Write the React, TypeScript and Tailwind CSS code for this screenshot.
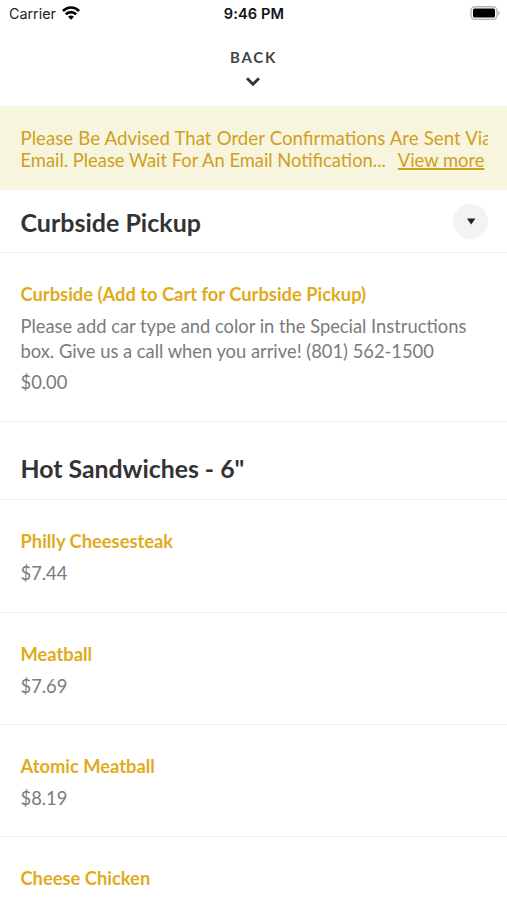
const items = [
  { name: 'Philly Cheesesteak', price: '$7.44', box: 'h-[113px] border-b' },
  { name: 'Meatball', price: '$7.69', box: 'h-[112px] border-b' },
  { name: 'Atomic Meatball', price: '$8.19', box: 'h-[112px] border-b' },
  { name: 'Cheese Chicken', price: null, box: 'h-[63px]' },
];

function StatusBar() {
  return (
    <div className="grid h-7 grid-cols-3 items-center pl-[9px] pr-[7px] font-['Inter',sans-serif] text-[14.3px] text-[#222]">
      <div className="flex items-center gap-[6px]">
        <span>Carrier</span>
        <svg className="-mt-[2px]" width="18" height="14" viewBox="0 0 18 14" fill="none" stroke="#000" strokeWidth="2.6">
          <path d="M.9 5C5.4.4 12.6.4 17.1 5M3.8 8.3c3-2.9 7.4-2.9 10.4 0" />
          <path d="M9 13.8 6 10.7c1.7-1.6 4.3-1.6 6 0Z" fill="#000" stroke="none" />
        </svg>
      </div>
      <span className="-ml-px whitespace-nowrap pt-px text-center text-[14.6px] font-semibold leading-[21px] tracking-[0.1px] text-[#111]">9:46 PM</span>
      <svg className="-mt-[2px] justify-self-end" width="30" height="14" viewBox="0 0 30 14">
        <rect x="1" y=".7" width="26" height="12.8" rx="4" fill="#fff" stroke="#b5b5b5" strokeWidth="1.4" />
        <rect x="3" y="2.6" width="22" height="9" rx="1.5" fill="#000" />
        <path d="M28.3 4.8c1.8.7 1.8 3.9 0 4.6Z" fill="#b0b0b0" />
      </svg>
    </div>
  );
}

export default function App() {
  return (
    <main className="h-[900px] w-[507px] overflow-hidden bg-white font-['Lato',sans-serif] text-[#7b7b7b]">
      <StatusBar />
      <header className="flex h-[78px] flex-col items-center pt-[19px]">
        <span className="text-[15px] font-bold leading-[20px] tracking-[1.8px] text-[#444]">BACK</span>
        <svg className="mr-px mt-[10px]" width="14" height="10" viewBox="0 0 14 10" fill="none" stroke="#333" strokeWidth="2.8">
          <path d="m1 1.2 6 6 6-6" />
        </svg>
      </header>
      <section className="h-[84px] bg-[#f8f5df] pl-[20.5px] pr-[19px] pt-[21px] text-[18.35px] leading-[22px] text-[#cf9f1e]">
        <p className="overflow-hidden whitespace-nowrap text-[18.65px] [word-spacing:0.4px]">Please Be Advised That Order Confirmations Are Sent Via</p>
        <p className="flex gap-3 whitespace-nowrap">
          <span>Email. Please Wait For An Email Notification...</span>
          <span className="underline decoration-[1.5px]">View more</span>
        </p>
      </section>
      <section className="flex h-[63px] items-center justify-between border-b border-[#f0f0f0] pl-[20.5px] pr-[19px] pt-px">
        <h1 className="text-[25px] font-bold leading-[32px] text-[#333]">Curbside Pickup</h1>
        <button className="grid size-[35px] place-items-center rounded-full bg-[#f3f3f3]">
          <svg width="10" height="7" viewBox="0 0 10 7"><path d="M1 .5h8.4L5.2 6.5Z" fill="#222" /></svg>
        </button>
      </section>
      <section className="h-[169px] border-b border-[#f0f0f0] px-[20.5px] pt-[29px] text-[18.33px]">
        <h2 className="mb-[8px] whitespace-nowrap font-bold leading-[24px] text-[#dfab1b]">Curbside (Add to Cart for Curbside Pickup)</h2>
        <p className="whitespace-nowrap leading-[24.5px]">Please add car type and color in the Special Instructions<br />box. Give us a call when you arrive! (801) 562-1500</p>
        <p className="mt-[7px] leading-[24px]">$0.00</p>
      </section>
      <h1 className="h-[78px] border-b border-[#f0f0f0] px-[20.5px] pt-[31px] text-[24.8px] font-bold leading-[32px] text-[#333]">Hot Sandwiches - 6"</h1>
      {items.map((item) => (
        <section key={item.name} className={`${item.box} border-[#f0f0f0] px-[20.5px] pt-[29px] text-[18.33px] leading-[24px]`}>
          <h2 className="mb-[8px] font-bold text-[#dfab1b]">{item.name}</h2>
          {item.price && <p>{item.price}</p>}
        </section>
      ))}
    </main>
  );
}
